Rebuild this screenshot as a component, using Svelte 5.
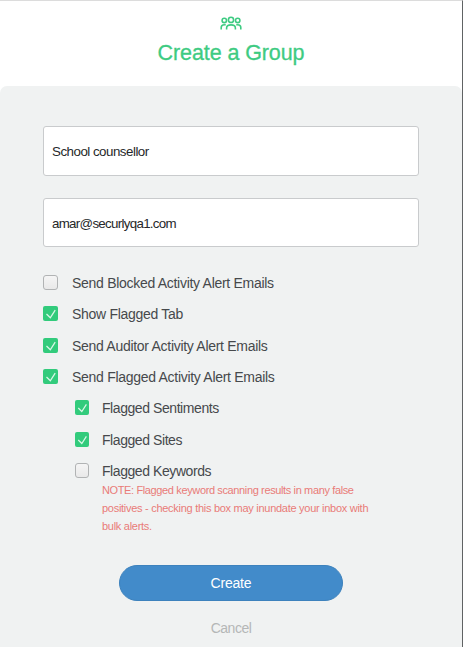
<script>
  let name = "School counsellor";
  let email = "amar@securlyqa1.com";

  let options = [
    { label: "Send Blocked Activity Alert Emails", checked: false },
    { label: "Show Flagged Tab", checked: true },
    { label: "Send Auditor Activity Alert Emails", checked: true },
    { label: "Send Flagged Activity Alert Emails", checked: true },
    { label: "Flagged Sentiments", checked: true, nested: true },
    { label: "Flagged Sites", checked: true, nested: true },
    { label: "Flagged Keywords", checked: false, nested: true }
  ];
</script>

<style>
  :global(body) {
    margin: 0;
    background: #fff;
  }

  main {
    box-sizing: border-box;
    width: 463px;
    height: 647px;
    overflow: hidden;
    border-top: 1px solid #dcdcdc;
    border-right: 1px solid #606364;
    font-family: "Liberation Sans", Arial, sans-serif;
    color: #46494c;
  }

  header {
    height: 85px;
    display: flex;
    flex-direction: column;
    align-items: center;
    color: #3ecb82;
  }

  .group-icon {
    display: block;
    width: 22px;
    height: 14px;
    margin-top: 15px;
  }

  h1 {
    margin: 10px 0 0;
    font-size: 21.5px;
    line-height: 26px;
    font-weight: normal;
    letter-spacing: -0.1px;
    -webkit-text-stroke: 0.3px currentColor;
    white-space: nowrap;
  }

  form {
    box-sizing: border-box;
    height: 562px;
    padding: 40px 43px 0;
    background: #f0f2f2;
    border-radius: 7px 7px 0 0;
  }

  .field {
    display: block;
    box-sizing: border-box;
    width: 376px;
    height: 50px;
    margin: 0;
    padding: 0 9px 0 8px;
    border: 1px solid #c9cbcd;
    border-radius: 3px;
    outline: none;
    background: #fff;
    color: #26282a;
    font: 13.33px "Liberation Sans", Arial, sans-serif;
    letter-spacing: -0.5px;
  }

  .email {
    height: 49px;
    margin-top: 22px;
    padding-top: 2px;
    letter-spacing: -0.7px;
  }

  .options {
    margin-top: 20px;
  }

  .option {
    display: flex;
    align-items: center;
    height: 31.33px;
    font-size: 14px;
    letter-spacing: -0.29px;
    white-space: nowrap;
  }

  .option input {
    position: absolute;
    opacity: 0;
  }

  .nested {
    margin-left: 32px;
    letter-spacing: -0.43px;
  }

  .box {
    box-sizing: border-box;
    flex: none;
    width: 15px;
    height: 15px;
    margin-right: 14px;
    border: 1px solid #b1b3b4;
    border-radius: 3px;
    background: linear-gradient(#f5f5f5, #e9e9e9);
  }

  .nested .box {
    width: 14px;
    margin-right: 13px;
  }

  .checked .box {
    border: none;
    border-radius: 2px;
    background: #32cb7c;
  }

  .box svg {
    display: block;
    width: 100%;
    height: 100%;
  }

  .text {
    padding-top: 1px;
  }

  .note {
    width: 275px;
    margin: -5px 0 0 59px;
    color: #e97b78;
    font-size: 11px;
    line-height: 18px;
    letter-spacing: -0.28px;
  }

  .note::first-line {
    letter-spacing: -0.37px;
  }

  .actions {
    display: flex;
    flex-direction: column;
    align-items: center;
    margin-top: 30px;
  }

  button {
    padding: 0;
    border: none;
    background: none;
    font: 14px "Liberation Sans", Arial, sans-serif;
    letter-spacing: -0.2px;
  }

  .create {
    box-sizing: border-box;
    width: 224px;
    height: 36px;
    border: 1px solid #3d82bd;
    border-radius: 18px;
    background: #428bca;
    color: #fff;
  }

  .cancel {
    height: 20px;
    margin-top: 17px;
    color: #b5b7b7;
    letter-spacing: -0.5px;
  }
</style>

<main>
  <header>
    <svg class="group-icon" viewBox="0 0 22 14" fill="none" stroke="currentColor" stroke-width="1.6">
      <circle cx="4.3" cy="4.4" r="2.2" />
      <circle cx="11" cy="3.9" r="2.6" />
      <circle cx="17.7" cy="4.4" r="2.2" />
      <path d="M1.200 13.500V11.500C1.200 9.500 2.500 8.700 4.300 8.700q.8 0 1.400.3" />
      <path d="M6.600 13.500v-1.500C6.600 10 8.500 8.900 11 8.900s4.400 1.100 4.400 3.100v1.500" />
      <path d="M20.800 13.500V11.500c0-2-1.300-2.800-3.100-2.800q-.8 0-1.400.3" />
    </svg>
    <h1>Create a Group</h1>
  </header>

  <form on:submit|preventDefault>
    <input class="field" type="text" aria-label="Group name" bind:value={name} />
    <input class="field email" type="text" aria-label="Email" bind:value={email} />

    <div class="options">
      {#each options as option}
        <label class="option" class:nested={option.nested} class:checked={option.checked}>
          <input type="checkbox" bind:checked={option.checked} />
          <span class="box">
            {#if option.checked}
              <svg viewBox="0 0 15 15" fill="none" stroke="#d9f7e7" stroke-width="1.3">
                <path d="M3.500 8l3.800 3.800L12.200 4.200" />
              </svg>
            {/if}
          </span>
          <span class="text">{option.label}</span>
        </label>
      {/each}
    </div>

    <div class="note">
      NOTE: Flagged keyword scanning results in many false positives - checking this box may inundate your inbox with bulk alerts.
    </div>

    <div class="actions">
      <button class="create" type="submit">Create</button>
      <button class="cancel" type="button">Cancel</button>
    </div>
  </form>
</main>
